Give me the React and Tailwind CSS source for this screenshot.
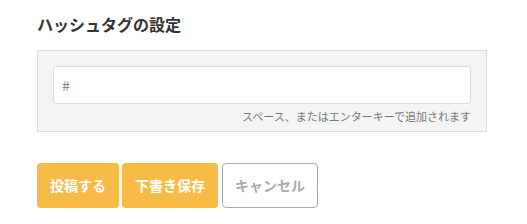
export default function App() {
  return (
    <div
      className="min-h-screen bg-white px-[37px] pt-[12px] text-[#333]"
      style={{ fontFamily: '"Noto Sans CJK JP", "Noto Sans", sans-serif' }}
    >
      <h2 className="text-[16px] font-bold leading-[24px]">ハッシュタグの設定</h2>

      <div className="mt-[14px] w-[450px] border border-[#dcdcdc] bg-[#f4f4f4] px-[15px] pt-[15px] pb-[7px]">
        <div className="flex h-[38px] items-center rounded-[4px] border border-[#dcdcdc] bg-white px-[8px]">
          <span className="text-[14px] text-[#888]">#</span>
        </div>
        <p className="mt-[4px] text-right text-[11px] leading-[16px] text-[#777]">
          スペース、またはエンターキーで追加されます
        </p>
      </div>

      <div className="mt-[31px] flex gap-[3px]">
        <button className="h-[45px] rounded-[4px] bg-[#f8bb45] px-[13px] text-[14px] font-bold text-white">
          投稿する
        </button>
        <button className="h-[45px] rounded-[4px] bg-[#f8bb45] px-[13px] text-[14px] font-bold text-white">
          下書き保存
        </button>
        <button className="ml-[1px] h-[45px] rounded-[4px] border border-[#aaa] bg-white px-[12px] text-[14px] font-bold text-[#aaa]">
          キャンセル
        </button>
      </div>
    </div>
  );
}
